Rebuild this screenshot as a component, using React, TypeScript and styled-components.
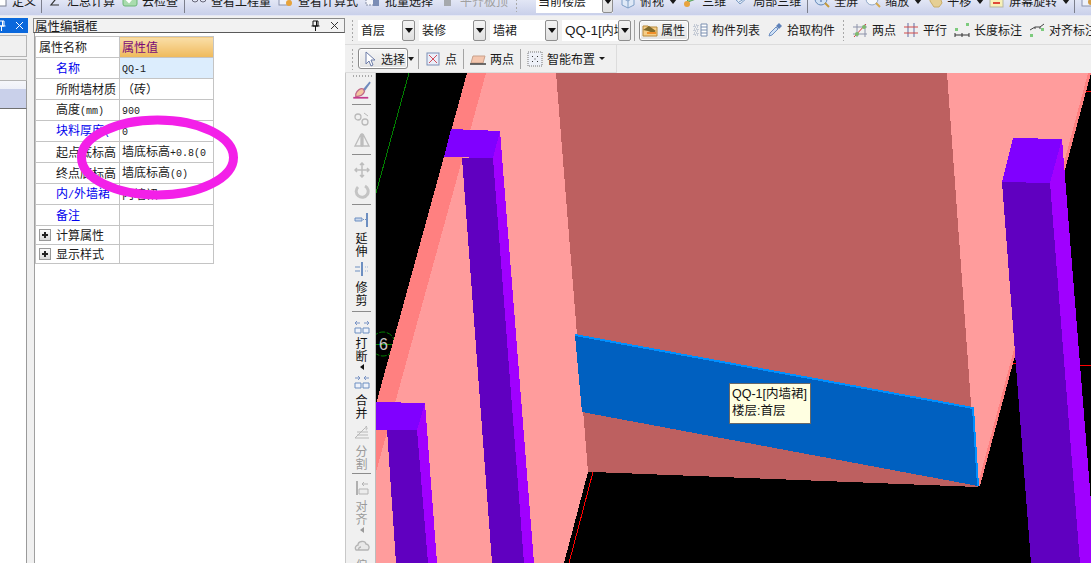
import React from "react";
import styled, { createGlobalStyle } from "styled-components";

const GlobalStyle = createGlobalStyle`
  html, body { margin: 0; padding: 0; background: #f0f0f0; }
  * { box-sizing: border-box; }
`;

const Page = styled.div`
  position: relative;
  width: 1091px;
  height: 563px;
  overflow: hidden;
  display: flex;
  flex-direction: column;
  background: #f0f0f0;
  color: #1a1a1a;
  font-family: "Noto Sans CJK SC", "Liberation Sans", sans-serif;
  font-size: 12px;
  line-height: 14px;
`;

/* ---------- top menu toolbar, cut off by the window edge ---------- */
const TopBar = styled.div`
  height: 16px;
  flex: none;
  overflow: hidden;
  background: linear-gradient(#e2e6f5, #c9d0ea);
  border-bottom: 1px solid #e6e8f4;
`;

const TopRow = styled.div`
  display: flex;
  align-items: center;
  gap: 7px;
  height: 24px;
  margin-top: -11px;
  margin-left: -8px;
  white-space: nowrap;
`;

const Item = styled.div<{ $off?: boolean }>`
  display: flex;
  flex: none;
  align-items: center;
  gap: 4px;
  color: ${(p) => (p.$off ? "#a0a0a0" : "#1a1a1a")};
`;

const TopSep = styled.div<{ $m?: number }>`
  flex: none;
  width: 1px;
  height: 24px;
  margin: 0 ${(p) => (p.$m ?? 0) - 1}px;
  background: #7c7f8c;
`;

const Caret = styled.span`
  flex: none;
  width: 0;
  height: 0;
  margin: 0 -2px;
  border-left: 4px solid transparent;
  border-right: 4px solid transparent;
  border-top: 5px solid #1a1a1a;
`;

const SmallCaret = styled(Caret)`
  margin: 0;
  border-left-width: 3px;
  border-right-width: 3px;
  border-top-width: 3px;
`;

const SelectCaret = styled(Caret)`
  margin: 0 -2px 0 -6px;
  border-left-width: 3px;
  border-right-width: 3px;
  border-top-width: 4px;
`;

const TopSelect = styled.div`
  display: flex;
  flex: none;
  height: 24px;
  width: 77px;
  margin-left: 11px;
  background: #fff;
  padding-left: 2px;
  align-items: center;
  justify-content: space-between;
`;

const Grip = styled.div<{ $h?: number; $w?: number }>`
  flex: none;
  width: ${(p) => p.$w ?? 3}px;
  height: ${(p) => p.$h ?? 22}px;
  background-image: radial-gradient(#a8a8a8 1px, transparent 1px);
  background-size: 3px 4px;
`;

/* ---------- left docks ---------- */
const Main = styled.div`
  flex: 1;
  min-height: 0;
  display: flex;
`;

const TreeDock = styled.div`
  flex: none;
  width: 33px;
  display: flex;
  flex-direction: column;
  padding: 2px 6px 0 0;
`;

const TreeTitle = styled.div`
  height: 15px;
  flex: none;
  background: #0a68dc;
  color: #fff;
  display: flex;
  align-items: center;
  justify-content: space-between;
  padding-right: 4px;
  overflow: hidden;
  margin-right: -1px;
`;

const ClippedPin = styled.span`
  display: flex;
  margin-left: -3px;
`;

const TreeTab = styled.div`
  height: 22px;
  flex: none;
  margin-top: 2px;
  background: #f0f0f0;
  border: 1px solid #b4b4b4;
  border-left: 0;
`;

const TreeCurrent = styled.div`
  height: 27px;
  flex: none;
  background: linear-gradient(#f6f7fb 0, #eef0f8 30%, #c9d0ea 31%, #c9d0ea 100%);
  border-right: 1px solid #9a9a9a;
`;

const TreeBody = styled.div`
  flex: 1;
  background: #fff;
  border-top: 1px solid #707070;
  border-right: 1px solid #9a9a9a;
`;

const PropDock = styled.div`
  flex: none;
  width: 312px;
  padding-top: 2px;
  display: flex;
  flex-direction: column;
`;

const PropTitle = styled.div`
  height: 15px;
  flex: none;
  border: 1px solid #8a8a8a;
  border-bottom-color: #5a5a5a;
  background: #f2f2f2;
  display: flex;
  align-items: center;
  justify-content: space-between;
  padding: 0 5px 0 1px;
  font-size: 12.5px;
`;

const TitleIcons = styled.div`
  display: flex;
  align-items: center;
  gap: 10px;
`;

const PropBody = styled.div`
  flex: 1;
  margin-left: 1px;
  padding-top: 3px;
  background: #fff;
  border-left: 1px solid #a0a0a0;
`;

const Table = styled.table`
  width: 179px;
  table-layout: fixed;
  border-collapse: collapse;
  font-size: 12px;
  color: #1a1a1a;
`;

const Row = styled.tr<{ $h?: number }>`
  height: ${(p) => p.$h ?? 21}px;
`;

const NameCell = styled.td<{ $blue?: boolean; $head?: boolean }>`
  width: 84px;
  border: 1px solid #c4c4c4;
  padding: 0 0 0 ${(p) => (p.$head ? 3 : 20)}px;
  overflow: hidden;
  white-space: nowrap;
  color: ${(p) => (p.$blue ? "#0000ee" : "#1a1a1a")};
`;

const ValueCell = styled.td<{ $active?: boolean }>`
  border: 1px solid #c4c4c4;
  padding: 0 0 0 2px;
  overflow: hidden;
  white-space: nowrap;
  background: ${(p) => (p.$active ? "#dcedfd" : "transparent")};
`;

const HeadValue = styled.td`
  border: 1px solid #c4c4c4;
  padding: 0 0 0 2px;
  color: #7a0a78;
  background: linear-gradient(#fadfa9, #efb95a);
`;

const Mono = styled.span`
  font-family: "Liberation Mono", monospace;
  font-size: 10px;
`;

const TreeName = styled.div`
  display: flex;
  align-items: center;
  gap: 5px;
  margin-left: -17px;
`;

const PlusBox = styled.span`
  position: relative;
  flex: none;
  width: 12px;
  height: 12px;
  border: 1px solid #9a9a9a;
  background: linear-gradient(#fafafa, #d8d8d8);
  &::before {
    content: "";
    position: absolute;
    left: 2px;
    top: 4px;
    width: 6px;
    height: 2px;
    background: #222;
  }
  &::after {
    content: "";
    position: absolute;
    left: 4px;
    top: 2px;
    width: 2px;
    height: 6px;
    background: #222;
  }
`;

const Annotation = styled.svg`
  position: absolute;
  left: 70px;
  top: 108px;
  pointer-events: none;
`;

/* ---------- workspace ---------- */
const Workspace = styled.div`
  flex: 1;
  min-width: 0;
  display: flex;
  flex-direction: column;
`;

const ToolRow = styled.div`
  flex: none;
  height: 29px;
  display: flex;
  align-items: center;
  gap: 7px;
  padding-left: 6px;
  white-space: nowrap;
  overflow: hidden;
  border-bottom: 1px solid #dcdcdc;
`;

const SubRow = styled.div`
  flex: none;
  height: 28px;
  display: flex;
`;

const SubBar = styled.div`
  width: 272px;
  display: flex;
  align-items: center;
  gap: 6px;
  padding-left: 6px;
  white-space: nowrap;
  border-right: 1px solid #dcdcdc;
  border-bottom: 1px solid #dcdcdc;
`;

const SubGrip = styled(Grip)`
  margin-right: -2px;
`;

const ComboGroup = styled.div`
  display: flex;
  gap: 4px;
  margin-left: -3px;
  margin-right: -4px;
`;

const Combo = styled.div<{ $w: number }>`
  display: flex;
  width: ${(p) => p.$w}px;
  height: 21px;
  background: #fff;
  overflow: hidden;
`;

const ComboText = styled.div`
  flex: 1;
  min-width: 0;
  padding-left: 3px;
  font-size: 12px;
  line-height: 20px;
  overflow: hidden;
`;

const ComboLatin = styled.span`
  font-family: "Liberation Sans", sans-serif;
  font-size: 13.5px;
`;

const ComboBtn = styled.div`
  flex: none;
  width: 13px;
  display: flex;
  align-items: center;
  justify-content: center;
  background: linear-gradient(#f4f4f4, #e0e0e0);
  border: 1px solid #8e8e8e;
  border-radius: 2px;
`;

const TopSelectBtn = styled(ComboBtn)`
  width: 11px;
  height: 100%;
`;

const DownMark = styled.span`
  width: 0;
  height: 0;
  border-left: 4px solid transparent;
  border-right: 4px solid transparent;
  border-top: 5px solid #111;
`;

const Toggle = styled.div<{ $pad: number; $gap: number }>`
  display: flex;
  flex: none;
  align-items: center;
  gap: ${(p) => p.$gap}px;
  width: 50px;
  height: 21px;
  padding-left: ${(p) => p.$pad}px;
  background: linear-gradient(#f6f6f6, #e4e4e4);
  border: 1px solid #8a8a8a;
  border-radius: 3px;
  box-shadow: inset 0 0 0 1px #fff;
`;

const RowToggle = styled(Toggle)`
  margin: 0 -4px 0 -3px;
`;

const RowSep = styled.div<{ $h?: number }>`
  flex: none;
  width: 1px;
  height: ${(p) => p.$h ?? 21}px;
  background: #a4a4a4;
`;

const Body = styled.div`
  position: relative;
  flex: 1;
  min-height: 0;
  display: flex;
`;

const VBar = styled.div`
  flex: none;
  width: 31px;
  padding-left: 2px;
  border-left: 1px solid #c8c8c8;
  border-right: 1px solid #bcbcbc;
  display: flex;
  flex-direction: column;
  align-items: center;
  overflow: hidden;
`;

const VSlot = styled.div<{ $h: number }>`
  flex: none;
  height: ${(p) => p.$h}px;
  display: flex;
  align-items: center;
  justify-content: center;
`;

const VSep = styled.div<{ $m: number }>`
  flex: none;
  width: 19px;
  height: 1px;
  margin: ${(p) => p.$m}px 0;
  background: #8c8c8c;
`;

const VText = styled.div<{ $off?: boolean }>`
  flex: none;
  width: 13px;
  font-size: 12px;
  line-height: 13px;
  text-align: center;
  color: ${(p) => (p.$off ? "#9a9a9a" : "#111")};
`;

const LeftMark = styled.span<{ $off?: boolean }>`
  flex: none;
  width: 0;
  height: 0;
  margin: 2px 0 1px;
  border-top: 3px solid transparent;
  border-bottom: 3px solid transparent;
  border-right: 4px solid ${(p) => (p.$off ? "#9a9a9a" : "#111")};
`;

const CanvasSvg = styled.svg`
  flex: 1;
  min-width: 0;
  height: 490px;
  display: block;
  background: #000;
`;

const Tip = styled.div`
  position: absolute;
  left: 384px;
  top: 310px;
  width: 82px;
  height: 41px;
  padding: 2px 0 0 2px;
  background: #ffffe1;
  border: 1px solid #686868;
  font-size: 12.5px;
  line-height: 17px;
  color: #111;
  font-family: "Liberation Sans", "Noto Sans CJK SC", sans-serif;
  white-space: nowrap;
`;

/* ---------- small drawings ---------- */
const Ic = ({ children, s = 16 }: { children: React.ReactNode; s?: number }) => (
  <svg width={s} height={s} viewBox="0 0 16 16" style={{ flex: "none" }}>
    {children}
  </svg>
);

const TopIcons: Record<string, React.ReactNode> = {
  define: <rect x="2" y="1" width="12" height="12" fill="#fff" stroke="#7b8092" />,
  sum: <path d="M4 2h8M4 2l4 5-4 5h8" fill="none" stroke="#333" strokeWidth="1.2" />,
  check: (
    <>
      <rect x="1" y="0" width="14" height="13" rx="2" fill="#a9dcae" stroke="#6bb777" />
      <path d="M4 6l3 3 5-6" fill="none" stroke="#fff" strokeWidth="2" />
    </>
  ),
  glasses: (
    <>
      <circle cx="4" cy="6" r="3" fill="none" stroke="#667" />
      <circle cx="12" cy="6" r="3" fill="none" stroke="#667" />
      <path d="M7 5h2" stroke="#667" />
    </>
  ),
  calc: (
    <>
      <rect x="1" y="1" width="11" height="11" fill="#eef1fa" stroke="#8a92ad" />
      <circle cx="11" cy="10" r="3" fill="#e7a33c" />
    </>
  ),
  batch: (
    <>
      <rect x="1" y="1" width="9" height="11" fill="#f4f5fa" stroke="#858da5" strokeDasharray="2 1" />
      <rect x="8" y="6" width="6" height="7" fill="#7b8db5" />
    </>
  ),
  flat: (
    <>
      <rect x="2" y="1" width="11" height="4" fill="#c6c8cc" />
      <rect x="4" y="6" width="7" height="7" fill="#a6a9ad" />
    </>
  ),
  cube: <path d="M2 5l6-4 6 3v8l-6 3-6-3zM2 5l6 3 6-4M8 8v7" fill="#dfe9f7" stroke="#7f9fc6" />,
  three: (
    <>
      <path d="M4 3l7-2 3 5-8 3z" fill="#8ccf8a" stroke="#5d9e5c" />
      <circle cx="5" cy="11" r="3" fill="#e8a33d" />
    </>
  ),
  local: (
    <>
      <path d="M2 6l7-5 5 4-7 6z" fill="#e3ebf7" stroke="#7f9fc6" />
      <path d="M4 7l5-3M6 9l5-3" stroke="#7f9fc6" />
    </>
  ),
  full: (
    <>
      <circle cx="7" cy="6" r="6" fill="#cfe0f5" stroke="#6287b8" />
      <path d="M7 3v6M4 6h6" stroke="#3a5f99" />
      <path d="M11 10l4 4" stroke="#c59a3b" strokeWidth="2" />
    </>
  ),
  zoom: (
    <>
      <circle cx="7" cy="6" r="6" fill="#f4f7fc" stroke="#8ea7c7" />
      <path d="M11 10l4 4" stroke="#d4a94e" strokeWidth="2" />
    </>
  ),
  hand: <path d="M3 3l4-2 6 3 2 6-3 4H7L3 8z" fill="#e5cf94" stroke="#c8ad6a" />,
  rotate: (
    <>
      <rect x="1" y="3" width="13" height="11" fill="#f8f1b8" stroke="#b6b6a2" />
      <path d="M3 3c3-3 7-3 9 0" fill="none" stroke="#3f9a5b" strokeWidth="2" />
      <path d="M4 10h7" stroke="#e04a3a" strokeWidth="2" />
    </>
  ),
  last: (
    <>
      <rect x="1" y="1" width="13" height="12" fill="#eef1fa" stroke="#8a92ad" />
      <circle cx="10" cy="9" r="3" fill="#d29b43" />
    </>
  ),
};

const RowIcons: Record<string, React.ReactNode> = {
  folder: (
    <>
      <path d="M1 4h5l1 1h8v9H1z" fill="#f6cd86" stroke="#b98a3a" />
      <path d="M1 8l6-4 7 5-3 2-5-2z" fill="#806a2c" />
      <path d="M5 11h9" stroke="#f08f2a" strokeWidth="2" />
    </>
  ),
  list: (
    <>
      <path d="M9 2h6v12H9z" fill="#fff" stroke="#7a8fb0" />
      <path d="M9 5h6M9 8h6M9 11h6" stroke="#7a8fb0" />
      <path d="M2 3h4v2H2zM2 7h4v2H2zM2 11h4v2H2z" fill="none" stroke="#9aa6ba" strokeDasharray="1 1" />
    </>
  ),
  pipette: (
    <>
      <path d="M2 14l1-3 6-6 2 2-6 6z" fill="#cfe1f6" stroke="#6d8fc1" />
      <path d="M9 4l3-3 3 3-3 3z" fill="#5f82b9" />
    </>
  ),
  axis: (
    <>
      <path d="M5 2v13M13 2v13M1 5h14M1 12h14" stroke="#8d93aa" />
      <path d="M2 15L14 2" stroke="#d23d3d" />
      <circle cx="5" cy="12" r="2" fill="#7dbb6d" />
      <circle cx="12" cy="5" r="2" fill="#7dbb6d" />
    </>
  ),
  parallel: (
    <>
      <path d="M5 1v14M11 1v14" stroke="#7a82b0" strokeWidth="1.2" fill="none" />
      <path d="M1 5h14M1 11h14" stroke="#d24a4a" strokeWidth="1.2" fill="none" />
    </>
  ),
  dimension: (
    <>
      <rect x="1" y="6" width="3" height="3" fill="#7dcb7d" />
      <rect x="12" y="1" width="3" height="3" fill="#7dcb7d" />
      <path d="M1 11v4M15 11v4M1 13h14M8 11v4" stroke="#333" />
    </>
  ),
  aligned: (
    <>
      <rect x="1" y="12" width="3" height="3" fill="#7dcb7d" />
      <rect x="12" y="6" width="3" height="3" fill="#7dcb7d" />
      <path d="M1 8l5-3 5 0 4-3M6 5v2M11 5v2" stroke="#444" fill="none" />
    </>
  ),
  cursor: <path d="M4 1v12l3-3 2 5 2-1-2-5h4z" fill="#fff" stroke="#6c7ca8" />,
  point: (
    <>
      <rect x="2" y="2" width="12" height="12" fill="#eaeef8" stroke="#7d8fb5" />
      <path d="M4 4l8 8M12 4l-8 8" stroke="#d24d5b" />
    </>
  ),
  twopoint: (
    <>
      <path d="M3 5h12l-2 7H1z" fill="#f4c6ae" stroke="#c9a08a" />
      <path d="M0 13h16" stroke="#333" strokeWidth="1.4" />
    </>
  ),
  smart: (
    <>
      <rect x="1" y="1" width="14" height="14" fill="#eef1f8" stroke="#777" strokeDasharray="1 1" />
      <path d="M5 5h1v1H5zM10 5h1v1h-1zM5 10h1v1H5zM10 10h1v1h-1zM7.5 7.5h1v1h-1z" fill="#333" />
    </>
  ),
};

const VIcons: Record<string, React.ReactNode> = {
  brush: (
    <>
      <path d="M9 8l5-6 1 1-5 7z" fill="#6f8bbd" />
      <path d="M3 12c1-3 4-5 6-4l1 2c-1 3-4 4-7 4z" fill="#f2c5a0" stroke="#c26a8a" />
      <path d="M1 15h12" stroke="#c33a8d" strokeWidth="1.4" />
    </>
  ),
  circles: (
    <>
      <circle cx="4" cy="6" r="3" fill="none" stroke="#b9b9b9" strokeWidth="1.3" />
      <circle cx="11" cy="11" r="3" fill="none" stroke="#b9b9b9" strokeWidth="1.3" />
      <path d="M10 2l4 3" stroke="#b9b9b9" />
    </>
  ),
  mirror: (
    <path d="M7 2v12H1zM9 2v12h6zM8 1v14" fill="none" stroke="#bdbdbd" strokeWidth="1.3" />
  ),
  move: (
    <path d="M8 1v14M1 8h14M6 3l2-2 2 2M6 13l2 2 2-2M3 6L1 8l2 2M13 6l2 2-2 2" fill="none" stroke="#bdbdbd" strokeWidth="1.5" />
  ),
  rotate: (
    <path d="M4 4a6 6 0 1 0 7-1" fill="none" stroke="#c4c4c4" strokeWidth="3" />
  ),
  extend: (
    <>
      <path d="M13 1v14" stroke="#6d8fc1" strokeWidth="2" />
      <path d="M1 6h7v3H1z" fill="#c9d7ec" stroke="#6d8fc1" />
      <path d="M9 7.5h3" stroke="#6d8fc1" strokeDasharray="1 1" />
    </>
  ),
  trim: (
    <>
      <path d="M8 1v14" stroke="#6d8fc1" strokeWidth="2" />
      <path d="M1 6h5M1 10h5" stroke="#6d8fc1" />
      <path d="M11 6h4M11 10h4" stroke="#9fb5d6" strokeDasharray="1 1" />
    </>
  ),
  cut: (
    <>
      <path d="M1 4h5M10 4h5M3 2L1 4l2 2M13 2l2 2-2 2" fill="none" stroke="#7893c4" />
      <path d="M1 9h6v5H1zM9 9h6v5H9z" fill="#eef2fa" stroke="#6d8fc1" />
    </>
  ),
  join: (
    <>
      <path d="M1 4h5M10 4h5M4 2l2 2-2 2M12 2l-2 2 2 2" fill="none" stroke="#7893c4" />
      <path d="M1 9h6v5H1zM9 9h6v5H9z" fill="#eef2fa" stroke="#6d8fc1" />
    </>
  ),
  split: (
    <>
      <path d="M1 14l12-12M1 14h14M3 8h11M3 11h11" fill="none" stroke="#b8b8b8" />
      <path d="M11 2l3 2-2 3z" fill="#c8c8c8" />
    </>
  ),
  align: (
    <>
      <path d="M3 1v14" stroke="#b0b0b0" strokeWidth="2" />
      <path d="M5 9h9v5H5z" fill="#ececec" stroke="#b4b4b4" />
      <path d="M8 4h6M8 4l2-2M8 4l2 2" fill="none" stroke="#b4b4b4" />
    </>
  ),
  offset: (
    <path d="M2 12c-2-3 1-5 2-5 0-4 7-5 8-1 3 0 4 4 2 6zM5 12c-1-2 1-3 2-3" fill="#e8e8e8" stroke="#b4b4b4" strokeWidth="1.3" />
  ),
};

const rows = [
  { name: "所附墙材质", value: <>（砖）</> },
  { name: <>高度<Mono>(mm)</Mono></>, value: <Mono>900</Mono> },
  { name: <>块料厚度<Mono>(</Mono></>, blue: true, value: <Mono>0</Mono> },
  { name: "起点底标高", value: <>墙底标高<Mono>+0.8(0</Mono></> },
  { name: "终点底标高", value: <>墙底标高<Mono>(0)</Mono></> },
  { name: <>内<Mono>/</Mono>外墙裙</>, blue: true, value: "内墙裙" },
  { name: "备注", blue: true, value: "" },
];

const Pin = ({ color }: { color: string }) => (
  <svg width="9" height="11" viewBox="0 0 9 11">
    <path d="M2 1h5v5H2zM0.5 6h8M4.5 6v5M5.5 1v5" fill="none" stroke={color} />
  </svg>
);

const Cross = ({ color }: { color: string }) => (
  <svg width="9" height="9" viewBox="0 0 9 9">
    <path d="M1 1l7 7M8 1L1 8" stroke={color} />
  </svg>
);

function Scene() {
  return (
    <CanvasSvg viewBox="376 73 715 490" shapeRendering="crispEdges">
      <path d="M409 73L376 193" stroke="#008000" fill="none" />
      <path d="M1085 91H1091M1010 363H1016M1080 365L1091 366M593 472L569 563" stroke="#ff0000" fill="none" />
      <g shapeRendering="auto">
        <circle cx="383" cy="344" r="12" fill="none" stroke="#008000" strokeDasharray="6 1.5" />
        <path d="M376 344.5H392" stroke="#008000" />
        <text x="379" y="350" fontSize="16" fill="#c8c8c8" fontFamily="Liberation Sans, sans-serif">6</text>
      </g>
      <polygon points="467,73 486,73 376,472 376,404" fill="#ff8080" />
      <polygon points="486,73 556,73 588,472 564,563 376,563 376,472" fill="#ff9c9c" />
      <polygon points="556,73 947,73 978,487 593,472 588,472" fill="#bd6060" />
      <polygon points="947,73 1091,73 980,486 977,486" fill="#ff8080" />
      <polygon points="947,73 1088,73 978,484 977,486" fill="#ff9c9c" />
      <polygon points="575,335 973,408 978,486 582,412" fill="#0060c0" />
      <polyline points="575,335 973,408 978,486" fill="none" stroke="#0090ff" strokeWidth="2" />
      <polygon points="462,158 493,158 524,563 492,563" fill="#6000c0" />
      <polygon points="500,131 534,563 524,563 493,158" fill="#a000ff" />
      <polygon points="451,129 500,131 493,158 444,157" fill="#8000ff" />
      <polygon points="387,430 417,430 428,563 396,563" fill="#6000c0" />
      <polygon points="425,403 437,563 428,563 417,430" fill="#a000ff" />
      <polygon points="376,402 425,403 417,430 376,430" fill="#8000ff" />
      <polygon points="1002,182 1050,183 1080,563 1031,563" fill="#6000c0" />
      <polygon points="1062,139 1091,502 1091,563 1080,563 1050,183" fill="#a000ff" />
      <polygon points="1013,138 1062,139 1050,183 1002,182" fill="#8000ff" />
    </CanvasSvg>
  );
}

export default function App() {
  return (
    <Page>
      <GlobalStyle />
      <TopBar>
        <TopRow>
          <Item><Ic>{TopIcons.define}</Ic>定义</Item>
          <TopSep $m={-1} />
          <Item><Ic>{TopIcons.sum}</Ic>汇总计算</Item>
          <Item><Ic>{TopIcons.check}</Ic>云检查</Item>
          <TopSep $m={0} />
          <Item><Ic>{TopIcons.glasses}</Ic>查看工程量</Item>
          <Item><Ic>{TopIcons.calc}</Ic>查看计算式</Item>
          <Item><Ic>{TopIcons.batch}</Ic>批量选择</Item>
          <Item $off><Ic>{TopIcons.flat}</Ic>平齐板顶</Item>
          <Grip />
          <TopSelect>当前楼层<TopSelectBtn><DownMark /></TopSelectBtn></TopSelect>
          <Item><Ic>{TopIcons.cube}</Ic>俯视</Item>
          <Caret />
          <Item><Ic>{TopIcons.three}</Ic>三维</Item>
          <Item><Ic>{TopIcons.local}</Ic>局部三维</Item>
          <TopSep $m={0} />
          <Item><Ic>{TopIcons.full}</Ic>全屏</Item>
          <Item><Ic>{TopIcons.zoom}</Ic>缩放</Item>
          <Caret />
          <Item><Ic>{TopIcons.hand}</Ic>平移</Item>
          <Caret />
          <Item><Ic>{TopIcons.rotate}</Ic>屏幕旋转</Item>
          <Caret />
          <TopSep $m={0} />
          <Item><Ic>{TopIcons.last}</Ic>构件</Item>
        </TopRow>
      </TopBar>

      <Main>
        <TreeDock>
          <TreeTitle>
            <ClippedPin><Pin color="#fff" /></ClippedPin>
            <Cross color="#fff" />
          </TreeTitle>
          <TreeTab />
          <TreeTab />
          <TreeCurrent />
          <TreeBody />
        </TreeDock>

        <PropDock>
          <PropTitle>
            属性编辑框
            <TitleIcons>
              <Pin color="#111" />
              <Cross color="#333" />
            </TitleIcons>
          </PropTitle>
          <PropBody>
            <Table>
              <tbody>
                <Row>
                  <NameCell $head>属性名称</NameCell>
                  <HeadValue>属性值</HeadValue>
                </Row>
                <Row>
                  <NameCell $blue>名称</NameCell>
                  <ValueCell $active><Mono>QQ-1</Mono></ValueCell>
                </Row>
                {rows.map((r, i) => (
                  <Row key={i}>
                    <NameCell $blue={r.blue}>{r.name}</NameCell>
                    <ValueCell>{r.value}</ValueCell>
                  </Row>
                ))}
                <Row $h={19}>
                  <NameCell><TreeName><PlusBox />计算属性</TreeName></NameCell>
                  <ValueCell />
                </Row>
                <Row $h={19}>
                  <NameCell><TreeName><PlusBox />显示样式</TreeName></NameCell>
                  <ValueCell />
                </Row>
              </tbody>
            </Table>
          </PropBody>
        </PropDock>

        <Workspace>
          <ToolRow>
            <Grip />
            <ComboGroup>
              <Combo $w={57}><ComboText>首层</ComboText><ComboBtn><DownMark /></ComboBtn></Combo>
              <Combo $w={67}><ComboText>装修</ComboText><ComboBtn><DownMark /></ComboBtn></Combo>
              <Combo $w={68}><ComboText>墙裙</ComboText><ComboBtn><DownMark /></ComboBtn></Combo>
              <Combo $w={69}><ComboText><ComboLatin>QQ-1[</ComboLatin>内墙裙</ComboText><ComboBtn><DownMark /></ComboBtn></Combo>
            </ComboGroup>
            <RowSep />
            <RowToggle $pad={2} $gap={3}><Ic>{RowIcons.folder}</Ic>属性</RowToggle>
            <Item><Ic>{RowIcons.list}</Ic>构件列表</Item>
            <Item><Ic>{RowIcons.pipette}</Ic>拾取构件</Item>
            <Grip />
            <Item><Ic>{RowIcons.axis}</Ic>两点</Item>
            <Item><Ic>{RowIcons.parallel}</Ic>平行</Item>
            <Item><Ic>{RowIcons.dimension}</Ic>长度标注</Item>
            <Item><Ic>{RowIcons.aligned}</Ic>对齐标注</Item>
          </ToolRow>
          <SubRow>
            <SubBar>
              <SubGrip />
              <Toggle $pad={3} $gap={3}><Ic>{RowIcons.cursor}</Ic>选择</Toggle>
              <SelectCaret />
              <RowSep $h={20} />
              <Item><Ic>{RowIcons.point}</Ic>点</Item>
              <RowSep $h={20} />
              <Item><Ic>{RowIcons.twopoint}</Ic>两点</Item>
              <RowSep $h={20} />
              <Item><Ic>{RowIcons.smart}</Ic>智能布置<SmallCaret /></Item>
            </SubBar>
          </SubRow>
          <Body>
            <VBar>
              <VSlot $h={4}><Grip $h={3} $w={20} /></VSlot>
              <VSlot $h={24}><Ic s={20}>{VIcons.brush}</Ic></VSlot>
              <VSep $m={3} />
              <VSlot $h={21}><Ic>{VIcons.circles}</Ic></VSlot>
              <VSlot $h={22}><Ic>{VIcons.mirror}</Ic></VSlot>
              <VSep $m={3} />
              <VSlot $h={23}><Ic>{VIcons.move}</Ic></VSlot>
              <VSlot $h={20}><Ic>{VIcons.rotate}</Ic></VSlot>
              <VSep $m={3} />
              <VSlot $h={23}><Ic>{VIcons.extend}</Ic></VSlot>
              <VText>延伸</VText>
              <VSlot $h={23}><Ic>{VIcons.trim}</Ic></VSlot>
              <VText>修剪</VText>
              <VSep $m={5} />
              <VSlot $h={19}><Ic>{VIcons.cut}</Ic></VSlot>
              <VText>打断</VText>
              <LeftMark />
              <VSlot $h={22}><Ic>{VIcons.join}</Ic></VSlot>
              <VText>合并</VText>
              <VSlot $h={25}><Ic>{VIcons.split}</Ic></VSlot>
              <VText $off>分割</VText>
              <VSep $m={3} />
              <VSlot $h={22}><Ic>{VIcons.align}</Ic></VSlot>
              <VText $off>对齐</VText>
              <LeftMark $off />
              <VSlot $h={24}><Ic>{VIcons.offset}</Ic></VSlot>
              <VText $off>偏移</VText>
            </VBar>
            <Scene />
            <Tip>QQ-1[内墙裙]<br />楼层:首层</Tip>
          </Body>
        </Workspace>
      </Main>

      <Annotation width="175" height="100" viewBox="70 108 175 100">
        <ellipse cx="157.5" cy="157.5" rx="76" ry="37.5" fill="none" stroke="#f320e8" strokeWidth="9" />
      </Annotation>
    </Page>
  );
}
